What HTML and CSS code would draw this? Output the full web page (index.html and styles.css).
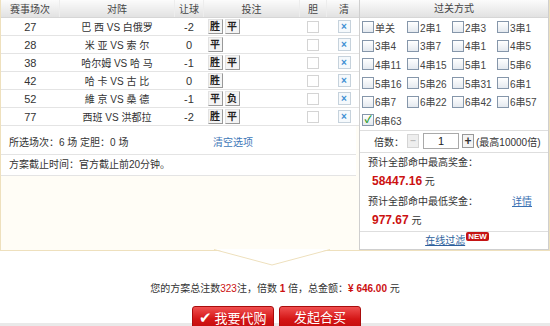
FILE: index.html
```html
<!DOCTYPE html>
<html lang="zh-CN">
<head>
    <meta charset="UTF-8">
    <title>投注确认</title>
    <link rel="stylesheet" href="styles.css">
</head>
<body>
    <div class="box">
        <div class="main">
            <div class="left">
                <table class="match">
                    <thead>
                        <tr>
                            <th class="c-no">赛事场次</th>
                            <th class="c-vs">对阵</th>
                            <th class="c-rq">让球</th>
                            <th class="c-bet">投注</th>
                            <th class="c-dan">胆</th>
                            <th class="c-clr">清</th>
                        </tr>
                    </thead>
                    <tbody>
                        <tr>
                            <td>27</td><td>巴 西 VS 白俄罗</td><td>-2</td>
                            <td class="bet"><span class="pick">胜</span><span class="pick">平</span></td>
                            <td><span class="dan"></span></td><td><span class="clr">×</span></td>
                        </tr>
                        <tr>
                            <td>28</td><td>米 亚 VS 索 尔</td><td>0</td>
                            <td class="bet"><span class="pick">平</span></td>
                            <td><span class="dan"></span></td><td><span class="clr">×</span></td>
                        </tr>
                        <tr>
                            <td>38</td><td>哈尔姆 VS 哈 马</td><td>-1</td>
                            <td class="bet"><span class="pick">胜</span><span class="pick">平</span></td>
                            <td><span class="dan"></span></td><td><span class="clr">×</span></td>
                        </tr>
                        <tr>
                            <td>42</td><td>哈 卡 VS 古 比</td><td>0</td>
                            <td class="bet"><span class="pick">胜</span></td>
                            <td><span class="dan"></span></td><td><span class="clr">×</span></td>
                        </tr>
                        <tr>
                            <td>52</td><td>維 京 VS 桑 德</td><td>-1</td>
                            <td class="bet"><span class="pick">平</span><span class="pick">负</span></td>
                            <td><span class="dan"></span></td><td><span class="clr">×</span></td>
                        </tr>
                        <tr>
                            <td>77</td><td>西班 VS 洪都拉</td><td>-2</td>
                            <td class="bet"><span class="pick">胜</span><span class="pick">平</span></td>
                            <td><span class="dan"></span></td><td><span class="clr">×</span></td>
                        </tr>
                    </tbody>
                </table>
                <div class="info info-first">
                    <span class="info-text">所选场次：6 场 定胆：0 场</span>
                    <a class="link-clear" href="#">清空选项</a>
                </div>
                <div class="info">方案截止时间：官方截止前20分钟。</div>
            </div>

            <div class="pass">
                <div class="pass-head">过关方式</div>
                <div class="pass-grid">
                    <label class="opt"><span class="cb"></span>单关</label>
                    <label class="opt"><span class="cb"></span>2串1</label>
                    <label class="opt"><span class="cb"></span>2串3</label>
                    <label class="opt"><span class="cb"></span>3串1</label>
                    <label class="opt"><span class="cb"></span>3串4</label>
                    <label class="opt"><span class="cb"></span>3串7</label>
                    <label class="opt"><span class="cb"></span>4串1</label>
                    <label class="opt"><span class="cb"></span>4串5</label>
                    <label class="opt"><span class="cb"></span>4串11</label>
                    <label class="opt"><span class="cb"></span>4串15</label>
                    <label class="opt"><span class="cb"></span>5串1</label>
                    <label class="opt"><span class="cb"></span>5串6</label>
                    <label class="opt"><span class="cb"></span>5串16</label>
                    <label class="opt"><span class="cb"></span>5串26</label>
                    <label class="opt"><span class="cb"></span>5串31</label>
                    <label class="opt"><span class="cb"></span>6串1</label>
                    <label class="opt"><span class="cb"></span>6串7</label>
                    <label class="opt"><span class="cb"></span>6串22</label>
                    <label class="opt"><span class="cb"></span>6串42</label>
                    <label class="opt"><span class="cb"></span>6串57</label>
                    <label class="opt"><span class="cb checked">✓</span>6串63</label>
                </div>
                <div class="times">
                    <span>倍数：</span>
                    <span class="step minus">–</span>
                    <span class="num">1</span>
                    <span class="step plus">+</span>
                    <span class="max">(最高10000倍)</span>
                </div>
                <div class="prize">
                    <div>预计全部命中最高奖金：</div>
                    <div class="money"><b>58447.16</b> 元</div>
                    <div class="prize-row">预计全部命中最低奖金：<a class="link-detail" href="#">详情</a></div>
                    <div class="money"><b>977.67</b> 元</div>
                </div>
                <div class="filter">
                    <a class="link-filter" href="#">在线过滤</a><span class="new">NEW</span>
                </div>
            </div>
        </div>

        <svg class="notch" width="116" height="18" viewBox="0 0 116 18">
            <polygon points="0,0 58,16 116,0" fill="#ffffff"/>
            <polyline points="0,0.5 58,16 116,0.5" fill="none" stroke="#eee0bd" stroke-width="1"/>
        </svg>
    </div>

    <p class="summary">
        您的方案总注数<em>323</em>注，倍数 <em class="b">1</em> 倍，总金额：<em class="b">¥ 646.00</em> 元
    </p>

    <div class="actions">
        <a class="btn" href="#"><span class="tick">✔</span>我要代购</a>
        <a class="btn" href="#">发起合买</a>
    </div>
    <div class="foot"></div>
</body>
</html>
```

FILE: styles.css
```css
body {
    margin: 0;
    width: 550px;
    font-family: "Liberation Sans", "Noto Sans CJK SC", sans-serif;
    font-size: 10px;
    color: #333;
    background: #fff;
    overflow: hidden;
}
a { text-decoration: none; }

.box {
    position: relative;
    height: 250px;
    border: 1px solid #eee0bd;
    border-top: none;
    background: #fffdf6;
}
.main {
    display: flex;
    align-items: flex-start;
}
.left {
    width: 355px;
}

/* match table */
.match {
    width: 355px;
    border-collapse: collapse;
    table-layout: fixed;
    background: #fff;
}
.match th {
    height: 17px;
    padding: 0;
    font-weight: normal;
    color: #444;
    background: linear-gradient(#fbfbfb, #e2e2e2);
    border-right: 1px solid #ededed;
    border-bottom: 1px solid #d6d6d6;
}
.c-no { width: 58px; }
.c-vs { width: 114px; }
.c-rq { width: 28px; }
.c-bet { width: 95px; }
.c-dan { width: 26px; }
.c-clr { width: 34px; }
.match td {
    height: 17px;
    padding: 0;
    text-align: center;
    border-bottom: 1px solid #e4e4e4;
    color: #333;
    font-size: 10px;
}
.match td:first-child,
.match td:nth-child(3) { font-size: 11px; }
.match td.bet {
    text-align: left;
    padding-left: 4px;
}
.pick {
    display: inline-block;
    width: 13px;
    height: 13px;
    margin-right: 2px;
    line-height: 13px;
    text-align: center;
    font-size: 10px;
    font-weight: bold;
    color: #222;
    background: #f4f4f4;
    border: 1px solid;
    border-color: #e2e2e2 #999 #999 #e2e2e2;
    vertical-align: middle;
}
.dan {
    display: inline-block;
    width: 10px;
    height: 10px;
    border: 1px solid #d4d4d4;
    background: #fff;
    vertical-align: middle;
}
.clr {
    display: inline-block;
    width: 11px;
    height: 11px;
    line-height: 11px;
    font-size: 10px;
    font-weight: bold;
    color: #3d8fd3;
    border: 1px solid #c6d2dc;
    background: #f5f9fc;
    vertical-align: middle;
}

.info {
    height: 20px;
    line-height: 20px;
    padding-left: 8px;
    background: #fff;
    border-bottom: 1px solid #e4e4e4;
    display: flex;
}
.info-first {
    height: 21px;
    padding-top: 7px;
}
.info-text { width: 204px; }
.link-clear { color: #3f78b8; }

/* pass panel */
.pass {
    width: 188px;
    margin-left: 3px;
    border: 1px solid #cfcfcf;
    border-top: none;
    background: #fff;
}
.pass-head {
    height: 17px;
    line-height: 17px;
    text-align: center;
    color: #444;
    background: linear-gradient(#fbfbfb, #e2e2e2);
    border-bottom: 1px solid #d6d6d6;
}
.pass-grid {
    display: grid;
    grid-template-columns: repeat(4, 45px);
    grid-auto-rows: 18.6px;
    padding-left: 2px;
    border-bottom: 1px solid #dedede;
}
.opt {
    display: flex;
    align-items: center;
    color: #444;
}
.cb {
    width: 10px;
    height: 10px;
    margin-right: 1px;
    border: 1px solid #8596aa;
    background: linear-gradient(#fff, #e4e9ef);
    font-size: 10px;
    line-height: 10px;
    color: #2a9a2a;
    font-weight: bold;
    text-align: center;
}

.times {
    display: flex;
    align-items: center;
    height: 21px;
    padding-left: 14px;
    border-bottom: 1px solid #dedede;
}
.step {
    width: 10px;
    height: 12px;
    line-height: 12px;
    text-align: center;
    margin-left: 3px;
    font-weight: bold;
}
.minus {
    color: #bbb;
    background: #eee;
    border: 1px solid #d4d4d4;
}
.plus {
    color: #333;
    background: #f4f4f4;
    border: 1px solid #999;
    font-size: 12px;
}
.num {
    width: 34px;
    height: 14px;
    line-height: 14px;
    margin-left: 4px;
    text-align: center;
    border: 1px solid #a9a9a9;
    color: #222;
    font-size: 11px;
}
.max {
    margin-left: 2px;
    color: #333;
}

.prize {
    padding: 0 8px 0 8px;
    border-bottom: 1px solid #dedede;
}
.prize > div {
    height: 19.5px;
    line-height: 19.5px;
}
.prize-row {
    display: flex;
    justify-content: space-between;
    padding-right: 8px;
}
.money { padding-left: 4px; }
.money b {
    color: #cc1111;
    font-size: 12px;
    font-weight: bold;
}
.link-detail {
    color: #3a70b2;
    text-decoration: underline;
}

.filter {
    height: 17px;
    line-height: 17px;
    text-align: center;
    padding-left: 6px;
}
.link-filter {
    color: #2d5f9c;
    text-decoration: underline;
}
.new {
    display: inline-block;
    margin-left: 1px;
    padding: 0 2px;
    height: 9px;
    line-height: 9px;
    font-size: 8px;
    font-weight: bold;
    color: #fff;
    background: #c51414;
    border-radius: 2px;
    vertical-align: 5px;
}

.notch {
    position: absolute;
    left: 213px;
    bottom: -17px;
}

/* summary + buttons */
.summary {
    margin: 30px 0 0;
    height: 16px;
    line-height: 16px;
    text-align: center;
    font-size: 10px;
    color: #333;
}
.summary em {
    font-style: normal;
    color: #cc1111;
}
.summary em.b { font-weight: bold; }

.actions {
    display: flex;
    justify-content: center;
    gap: 5px;
    height: 17px;
    margin-top: 9px;
    padding-left: 3px;
}
.btn {
    position: relative;
    z-index: 1;
    display: block;
    width: 80px;
    height: 22px;
    line-height: 22px;
    text-align: center;
    font-size: 13px;
    color: #fff;
    background: linear-gradient(#f05050, #d41616 55%, #c20c0c);
    border: 1px solid #a90c0c;
    border-radius: 3px;
}
.tick {
    font-size: 15px;
    margin-right: 2px;
}
.foot {
    height: 10px;
    background: #e9e9e9;
}
```
